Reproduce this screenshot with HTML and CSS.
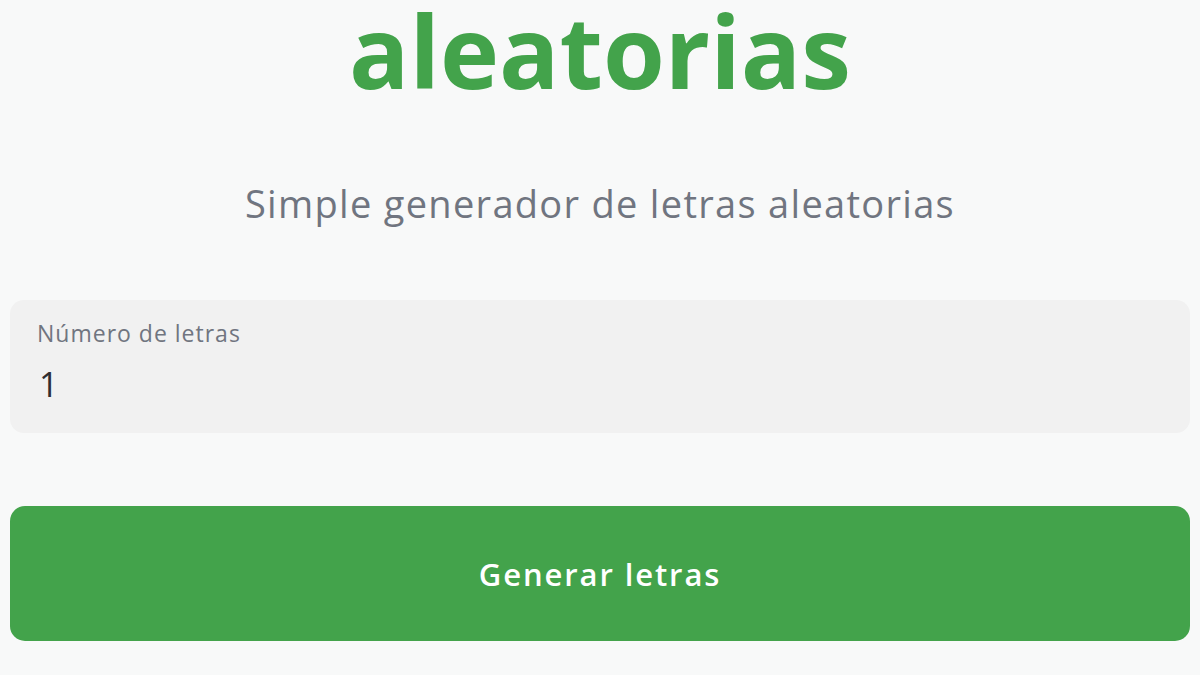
FILE: index.html
```html
<!DOCTYPE html>
<html lang="es">
<head>
<meta charset="utf-8">
<title>Generador de letras aleatorias</title>
<link rel="stylesheet" href="styles.css">
</head>
<body>
<main class="page">
  <h1 class="title">aleatorias</h1>
  <p class="subtitle">Simple generador de letras aleatorias</p>
  <label class="field">
    <span class="field-label">Número de letras</span>
    <input class="field-input" type="text" value="1">
  </label>
  <button class="btn" type="button">Generar letras</button>
</main>
</body>
</html>
```

FILE: styles.css
```css
* { box-sizing: border-box; }
html, body {
  margin: 0;
  padding: 0;
  background: #f8f9f9;
}
body {
  font-family: "Open Sans", "Noto Sans", sans-serif;
  overflow: hidden;
}
.page {
  display: flex;
  flex-direction: column;
  padding: 0 10px;
}
.title {
  margin: 0;
  height: 120px;
  text-align: center;
  color: #43a34b;
  font-size: 100px;
  font-weight: 700;
  line-height: 100px;
  letter-spacing: 0;
}
.subtitle {
  margin: 61px 0 0;
  text-align: center;
  color: #707580;
  font-size: 38px;
  font-weight: 400;
  line-height: 44px;
  letter-spacing: 1.3px;
}
.field {
  margin-top: 75px;
  display: flex;
  flex-direction: column;
  background: #f1f1f1;
  border-radius: 14px;
  height: 133px;
  padding: 19px 27px 0;
}
.field-label {
  color: #707580;
  font-size: 23px;
  line-height: 28px;
  letter-spacing: 1px;
}
.field-input {
  border: none;
  background: transparent;
  outline: none;
  font-family: inherit;
  font-size: 34px;
  color: #2e2e33;
  padding: 0 0 0 2px;
  margin-top: 15px;
  height: 44px;
  line-height: 44px;
}
.btn {
  margin-top: 73px;
  height: 135px;
  border: none;
  border-radius: 15px;
  background: #43a34b;
  color: #ffffff;
  font-family: inherit;
  font-size: 31px;
  font-weight: 600;
  letter-spacing: 1.9px;
}
```
